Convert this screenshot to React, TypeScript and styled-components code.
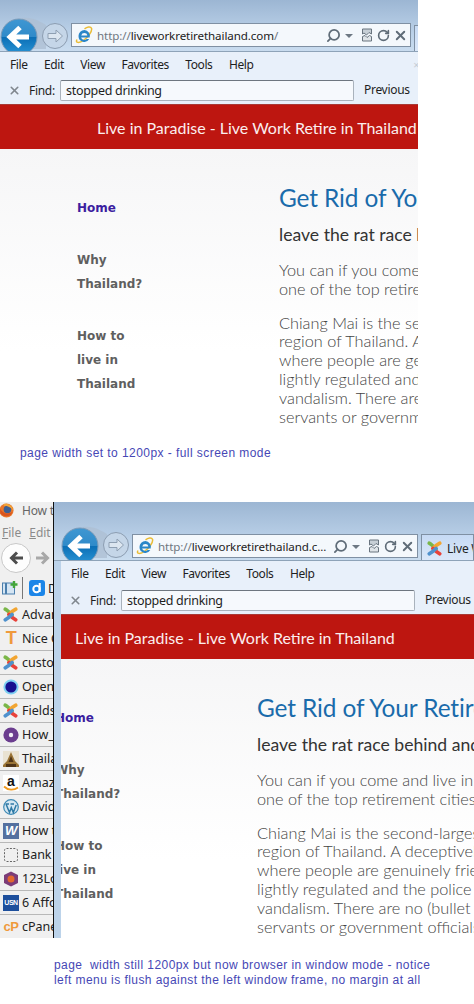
import React from "react";
import styled, { createGlobalStyle } from "styled-components";
import { RotateCw, Search, X } from "lucide-react";

const Global = createGlobalStyle`
  html, body { margin: 0; padding: 0; background: #fff; }
  #root { width: 474px; height: 1004px; overflow: hidden; }
  * { box-sizing: border-box; }
`;

const Sheet = styled.main`
  width: 474px;
  height: 1004px;
  display: flex;
  flex-direction: column;
  background: #fff;
`;

const Shot = styled.section<{ $h: number; $w: number }>`
  display: flex;
  width: ${(p) => p.$w}px;
  height: ${(p) => p.$h}px;
  flex: none;
  overflow: hidden;
`;

const Win = styled.div`
  flex: 1;
  min-width: 0;
  display: flex;
  flex-direction: column;
  overflow: hidden;
`;

const Nav = styled.div<{ $h: number; $frame: number }>`
  height: ${(p) => p.$h}px;
  flex: none;
  display: flex;
  align-items: flex-end;
  padding-left: ${(p) => p.$frame}px;
  background: linear-gradient(#9cb6d3, #bdd3ea 70%, #c9dcef);
  border-bottom: 1px solid #8ea3b8;
  overflow: hidden;
`;

const Cluster = styled.svg`
  flex: none;
  display: block;
  margin-bottom: -1px;
`;

const Address = styled.div<{ $w: number; $drop: number }>`
  flex: none;
  width: ${(p) => p.$w}px;
  height: 24px;
  margin-bottom: ${(p) => p.$drop}px;
  display: flex;
  align-items: center;
  padding: 0 2px 0 3px;
  background: #f4f8fc;
  border: 1px solid #7f90a3;
  font: 11.6px "Noto Sans", sans-serif;
  color: #222;
`;

const Url = styled.span`
  margin-left: 4px;
  flex: 1;
  min-width: 0;
  white-space: nowrap;
  overflow: hidden;
  letter-spacing: -0.1px;
`;

const Dim = styled.span`
  color: #6f7780;
`;

const ToolIcons = styled.div`
  flex: none;
  display: flex;
  align-items: center;
  gap: 3px;
  color: #5f6c78;
`;

const Caret = styled.i`
  width: 0;
  height: 0;
  margin: 1px 4px 0 1px;
  border: 4px solid transparent;
  border-top: 4px solid #6d7883;
  border-bottom: 0;
`;

const TabStub = styled.div`
  flex: 1;
  min-width: 0;
  margin-left: 3px;
  height: 27px;
  margin-bottom: -1px;
  padding-left: 5px;
  display: flex;
  align-items: center;
  gap: 4px;
  background: linear-gradient(#c6daf4, #dbe8f9);
  border: 1px solid #7f90a3;
  border-bottom: 0;
  font: 12px "Noto Sans", sans-serif;
  color: #222;
  white-space: nowrap;
  overflow: hidden;
`;

const Body = styled.div<{ $frame: number }>`
  flex: 1;
  min-height: 0;
  display: flex;
  flex-direction: column;
  border-left: ${(p) => p.$frame}px solid #bcd3ea;
`;

const MenuRow = styled.nav<{ $h: number }>`
  height: ${(p) => p.$h}px;
  flex: none;
  display: flex;
  align-items: center;
  padding: 0 0 2px 10px;
  gap: 16.5px;
  background: #e8f0fa;
  font: 12px "Noto Sans", sans-serif;
  letter-spacing: -0.42px;
  color: #1e1e1e;
`;

const BarClose = styled.span`
  margin-left: auto;
  margin-right: -1px;
  color: #c4ccd4;
  font-size: 11px;
`;

const FindRow = styled.div<{ $h: number }>`
  height: ${(p) => p.$h}px;
  flex: none;
  display: flex;
  align-items: center;
  padding: 0 0 1px 8px;
  background: #e8f0fa;
  font: 12px "Noto Sans", sans-serif;
  letter-spacing: -0.3px;
  color: #1e1e1e;
  white-space: nowrap;
  overflow: hidden;
`;

const FindLabel = styled.span`
  margin: 0 3px 0 8px;
  width: 28px;
`;

const FindInput = styled.div`
  flex: none;
  width: 294px;
  height: 21px;
  padding-left: 5px;
  display: flex;
  align-items: center;
  background: #f6f9fd;
  border: 1px solid #a9b2bc;
  border-top-color: #6e7680;
  border-radius: 2px;
  font-size: 12.5px;
`;

const Prev = styled.span`
  margin: 0 0 2px 10px;
`;

const Banner = styled.header<{ $left: number }>`
  height: 45px;
  flex: none;
  display: flex;
  align-items: center;
  padding-left: ${(p) => p.$left}px;
  background: #bd1610;
  border-top: 1px solid #a83a36;
  font: 16px Lato, sans-serif;
  color: #fbeeee;
  white-space: nowrap;
`;

const Page = styled.div`
  flex: 1;
  min-height: 0;
  overflow: hidden;
  background: linear-gradient(#f6f6f7, #fff 72%);
`;

const PageInner = styled.div<{ $left: number }>`
  margin-left: ${(p) => p.$left}px;
  display: grid;
  grid-template-columns: 202px 1fr;
  white-space: nowrap;
`;

const SideMenu = styled.ul`
  list-style: none;
  margin: 0;
  padding: 47px 0 0;
`;

const SideItem = styled.li<{ $active?: boolean }>`
  margin-bottom: 28px;
  font: bold 12px/24px "DejaVu Sans", sans-serif;
  color: ${(p) => (p.$active ? "#3c1ea0" : "#5f5f5f")};
`;

const Main = styled.article`
  padding-top: 33px;
`;

const Title = styled.h1`
  margin: 0;
  font: 400 24.4px/32px Lato, sans-serif;
  letter-spacing: -0.1px;
  color: #1a6bab;
`;

const Sub = styled.h2`
  margin: 11px 0 0;
  font: 400 17.6px/20px Lato, sans-serif;
  color: #333;
`;

const Para = styled.p`
  margin: 15px 0 0;
  font: 300 16.3px/18.8px Lato, sans-serif;
  color: #444;
  &:first-of-type { margin-top: 16px; }
`;

const Line = styled.span`
  display: block;
`;

const Caption = styled.p<{ $left: number; $top: number; $h: number }>`
  margin: 0;
  flex: none;
  height: ${(p) => p.$h}px;
  padding: ${(p) => p.$top}px 0 0 ${(p) => p.$left}px;
  font: 12px/15px "Liberation Sans", Arial, sans-serif;
  letter-spacing: 0.44px;
  color: #4647b5;
  white-space: pre;
`;

const Side = styled.aside`
  flex: none;
  width: 54px;
  display: flex;
  flex-direction: column;
  background: #f0f0f0;
  border-right: 1px solid #111;
  overflow: hidden;
  font: 12.5px "Noto Sans", sans-serif;
  color: #222;
  white-space: nowrap;
`;

const FxTitle = styled.div`
  height: 20px;
  flex: none;
  display: flex;
  align-items: center;
  gap: 8px;
  margin: -2px 0 2px -1px;
  color: #666;
  font-size: 12px;
  letter-spacing: -0.2px;
`;

const FxMenu = styled.div`
  height: 20px;
  flex: none;
  display: flex;
  gap: 8px;
  align-items: center;
  padding-left: 2px;
  color: #8b8b8b;
  font-size: 12px;
  & u { text-decoration-thickness: 1px; }
`;

const FxNav = styled.div`
  height: 32px;
  flex: none;
  display: flex;
  align-items: center;
  padding-left: 1px;
  gap: 4px;
`;

const RoundBack = styled.div`
  width: 30px;
  height: 30px;
  flex: none;
  display: flex;
  align-items: center;
  justify-content: center;
  background: #fdfdfd;
  border: 1px solid #c8c8c8;
  border-radius: 50%;
`;

const FxBar = styled.div`
  height: 29px;
  flex: none;
  display: flex;
  align-items: center;
  padding-left: 2px;
  gap: 3px;
  border-bottom: 1px solid #b8b8b8;
`;

const FxSep = styled.i`
  width: 1px;
  height: 22px;
  margin: 0 3px 0 1px;
  background: #777;
  flex: none;
`;

const Bookmark = styled.div`
  height: 24px;
  flex: none;
  display: flex;
  align-items: center;
  gap: 3px;
  padding-left: 3px;
  border-bottom: 1px solid #b8b8b8;
`;

const Badge = styled.span<{ $bg: string; $fg: string; $size: number; $italic?: boolean }>`
  width: 16px;
  height: 16px;
  flex: none;
  display: flex;
  align-items: center;
  justify-content: center;
  background: ${(p) => p.$bg};
  color: ${(p) => p.$fg};
  font: ${(p) => (p.$italic ? "italic" : "normal")} bold ${(p) => p.$size}px "Liberation Sans", sans-serif;
  letter-spacing: -0.5px;
`;

const TabText = styled.span`
  letter-spacing: -0.2px;
`;

/* ---------- drawings ---------- */

const NavButtons = () => (
  <Cluster width="71" height="41" viewBox="0 0 71 41">
    <defs>
      <linearGradient id="backFill" x1="0" y1="0" x2="0" y2="1">
        <stop offset="0" stopColor="#3f97d2" />
        <stop offset="0.5" stopColor="#2f8ac9" />
        <stop offset="0.51" stopColor="#0b6fb6" />
        <stop offset="1" stopColor="#2a95d6" />
      </linearGradient>
    </defs>
    <path d="M22 7 C34 6 40 11 46 14 L46 38 L22 38 Z" fill="#aebfd3" opacity=".8" />
    <circle cx="55" cy="25" r="12.5" fill="#c5d6e8" stroke="#8c9db1" />
    <path d="M47.5 25 L54 19 V22.5 H62 V27.5 H54 V31 Z" transform="scale(-1 1) translate(-110 0)" fill="#dce6f0" stroke="#8e9fb2" strokeWidth="1" strokeLinejoin="round" />
    <circle cx="19" cy="26" r="18" fill="url(#backFill)" stroke="#7d9bb8" />
    <path d="M10 26 H29 M20 16.5 L10 26 L20 35.5" fill="none" stroke="#fff" strokeWidth="5" strokeLinejoin="miter" />
  </Cluster>
);

const IeLogo = ({ size = 18 }: { size?: number }) => (
  <svg width={size} height={size} viewBox="0 0 18 18" style={{ flex: "none" }}>
    <path d="M2 13.5 C0 17 4 17.5 9 14 C13 11 17.5 5 16.5 2.2 C15.5 0 12 1 9.5 2.8" fill="none" stroke="#e9bc35" strokeWidth="1.5" />
    <path d="M9.5 4 a6 6 0 0 0 -6 6 a5.8 5.8 0 0 0 10.8 3 h-2.6 a3.4 3.4 0 0 1 -5.6 -1.6 h8.6 a6 6 0 0 0 -5.2 -7.4 z M6.2 9.4 a3.3 3.3 0 0 1 6.3 0 z" fill="#2a86c8" fillRule="evenodd" />
  </svg>
);

const CompatIcon = () => (
  <svg width="14" height="14" viewBox="0 0 14 14" fill="none" stroke="#69747f" strokeWidth="1">
    <path d="M2.5 1 H11.5 V6 L9 4.5 L6.5 7 L4 5 L2.5 6 Z" fill="#c7cfd6" />
    <path d="M2.5 8.5 L5 7.5 L7 9.5 L9.5 7.5 L11.5 8.5 V13 H2.5 Z" fill="#dfe4e8" />
  </svg>
);

const Joomla = ({ size = 17 }: { size?: number }) => (
  <svg width={size} height={size} viewBox="0 0 16 16" style={{ flex: "none", marginLeft: -1 }} fill="none" strokeWidth="3.4" strokeLinecap="round">
    <path d="M3 3 C5 4 7 6 9.5 8.5" stroke="#7ab648" />
    <path d="M13 3 C11 4 8.5 6 6.5 8" stroke="#f2a531" />
    <path d="M13 13 C11 12 8.5 10 6.5 8" stroke="#e8423a" />
    <path d="M3 13 C5 12 7.5 10 9.5 8" stroke="#4f91cd" />
  </svg>
);

const Firefox = () => (
  <svg width="15" height="15" viewBox="0 0 16 16" style={{ flex: "none" }}>
    <circle cx="8" cy="8" r="7.5" fill="#e8762b" />
    <circle cx="9" cy="7" r="4" fill="#3d5f93" />
    <path d="M1 6 C4 11 10 13 14.5 9 C13 15 5 16 1.5 11 Z" fill="#d9541e" />
    <path d="M5 1 C10 0 15 3 15 8 C13 5 10 3 5 3 Z" fill="#f2a53a" />
  </svg>
);

const Ring = ({ bg, fg, inner }: { bg: string; fg: string; inner: string }) => (
  <svg width="16" height="16" viewBox="0 0 16 16" style={{ flex: "none" }}>
    <circle cx="8" cy="8" r="7.6" fill={bg} />
    <circle cx="8" cy="8" r="5.6" fill={fg} />
    <circle cx="8" cy="8" r="2.2" fill={inner} />
  </svg>
);

const Temple = () => (
  <svg width="16" height="16" viewBox="0 0 16 16" style={{ flex: "none" }}>
    <rect width="16" height="16" fill="#e9e2d2" />
    <path d="M8 1 L12 10 L16 14 V16 H0 V14 L4 10 Z" fill="#9a7436" />
    <path d="M8 5 L10.5 11 H5.5 Z M3 13 H13 V16 H3 Z" fill="#4f3518" />
  </svg>
);

const Amazon = () => (
  <svg width="16" height="16" viewBox="0 0 16 16" style={{ flex: "none" }}>
    <rect width="16" height="16" fill="#fff" />
    <text x="8" y="11" textAnchor="middle" fontFamily="Liberation Sans" fontWeight="700" fontSize="14" fill="#111">a</text>
    <path d="M1 11.5 C5 15.5 11 15.5 15 12.5" fill="none" stroke="#f09a1e" strokeWidth="1.8" />
  </svg>
);

const Wordpress = () => (
  <svg width="16" height="16" viewBox="0 0 16 16" style={{ flex: "none" }}>
    <circle cx="8" cy="8" r="7.3" fill="#d5e7f2" stroke="#3d89b4" strokeWidth="1.2" />
    <path d="M3 5 L6.5 13.5 L8.3 8.5 L10.3 13.5 L13.2 6 M2.5 5 H6 M7.5 5 H11" fill="none" stroke="#2f7aa6" strokeWidth="1.5" />
  </svg>
);

const Dashed = () => (
  <svg width="16" height="16" viewBox="0 0 16 16" style={{ flex: "none" }}>
    <rect x="1.5" y="1.5" width="13" height="13" rx="2" fill="none" stroke="#666" strokeDasharray="2 1.4" />
  </svg>
);

const Hex = () => (
  <svg width="16" height="16" viewBox="0 0 16 16" style={{ flex: "none" }}>
    <path d="M8 0.5 L15 4 V12 L8 15.5 L1 12 V4 Z" fill="#7c3c78" />
    <circle cx="8" cy="8" r="3.5" fill="#e2682e" />
  </svg>
);

const AddonIcon = () => (
  <svg width="16" height="16" viewBox="0 0 16 16" style={{ flex: "none" }}>
    <rect x="0.5" y="3" width="12" height="11" fill="#d5e5f3" stroke="#4b7fad" />
    <rect x="3" y="3" width="2" height="11" fill="#4b7fad" />
    <path d="M12 1 V8 M8.5 4.5 H15.5" stroke="#43a53a" strokeWidth="2.4" />
  </svg>
);

const DIcon = () => (
  <svg width="16" height="16" viewBox="0 0 16 16" style={{ flex: "none" }}>
    <rect width="16" height="16" rx="3" fill="#1d86e8" />
    <circle cx="7.5" cy="9" r="3.2" fill="none" stroke="#fff" strokeWidth="2" />
    <path d="M10.7 3 V12" stroke="#fff" strokeWidth="2" />
  </svg>
);

const FxArrow = ({ color, flip }: { color: string; flip?: boolean }) => (
  <svg width="15" height="14" viewBox="0 0 15 14" style={{ flex: "none", transform: flip ? "scaleX(-1)" : undefined }}>
    <path d="M2 7 H14 M8 1.5 L2.5 7 L8 12.5" fill="none" stroke={color} strokeWidth="3" />
  </svg>
);

/* ---------- data ---------- */

const bookmarks: { icon: React.ReactNode; label: string }[] = [
  { icon: <Joomla />, label: "Advanced" },
  { icon: <Badge $bg="transparent" $fg="#ef9a3c" $size={18}>T</Badge>, label: "Nice Code" },
  { icon: <Joomla />, label: "custom" },
  { icon: <Ring bg="#7fd0f2" fg="#16108f" inner="#16108f" />, label: "Open" },
  { icon: <Joomla />, label: "Fields" },
  { icon: <Ring bg="#6b3d8f" fg="#6b3d8f" inner="#f3f0f6" />, label: "How_to" },
  { icon: <Temple />, label: "Thailand" },
  { icon: <Amazon />, label: "Amazon" },
  { icon: <Wordpress />, label: "David" },
  { icon: <Badge $bg="#54709f" $fg="#fff" $size={13} $italic>W</Badge>, label: "How to" },
  { icon: <Dashed />, label: "Bank of" },
  { icon: <Hex />, label: "123Logo" },
  { icon: <Badge $bg="#1d4f9c" $fg="#fff" $size={7}>USN</Badge>, label: "6 Afford" },
  { icon: <Badge $bg="transparent" $fg="#ef9a3c" $size={13}>cP</Badge>, label: "cPanel" },
];

const FirefoxPanel = () => (
  <Side>
    <FxTitle>
      <Firefox />
      <span>How to</span>
    </FxTitle>
    <FxMenu>
      <span><u>F</u>ile</span>
      <span><u>E</u>dit</span>
    </FxMenu>
    <FxNav>
      <RoundBack><FxArrow color="#4d4d4d" /></RoundBack>
      <FxArrow color="#a8a8a8" flip />
    </FxNav>
    <FxBar>
      <AddonIcon />
      <FxSep />
      <DIcon />
      <span>D</span>
    </FxBar>
    {bookmarks.map((b) => (
      <Bookmark key={b.label}>
        {b.icon}
        <span>{b.label}</span>
      </Bookmark>
    ))}
  </Side>
);

type BrowserProps = {
  navH: number;
  frame: number;
  addressW: number;
  drop: number;
  url: React.ReactNode;
  tab: React.ReactNode;
  menuH: number;
  findH: number;
  bannerLeft: number;
  pageLeft: number;
  barClose?: boolean;
};

const Browser = (p: BrowserProps) => (
  <Win>
    <Nav $h={p.navH} $frame={p.frame}>
      <NavButtons />
      <Address $w={p.addressW} $drop={p.drop}>
        <IeLogo />
        <Url>{p.url}</Url>
        <ToolIcons>
          <Search size={15} strokeWidth={2.8} style={{ transform: "scaleX(-1)" }} />
          <Caret />
          <CompatIcon />
          <RotateCw size={13} strokeWidth={3} />
          <X size={15} strokeWidth={3} />
        </ToolIcons>
      </Address>
      <TabStub>{p.tab}</TabStub>
    </Nav>
    <Body $frame={p.frame}>
      <MenuRow $h={p.menuH}>
        <span>File</span>
        <span>Edit</span>
        <span>View</span>
        <span>Favorites</span>
        <span>Tools</span>
        <span>Help</span>
        {p.barClose && <BarClose>×</BarClose>}
      </MenuRow>
      <FindRow $h={p.findH}>
        <X size={13} strokeWidth={3} color="#80878e" />
        <FindLabel>Find:</FindLabel>
        <FindInput>stopped drinking</FindInput>
        <Prev>Previous</Prev>
      </FindRow>
      <Banner $left={p.bannerLeft}>Live in Paradise - Live Work Retire in Thailand</Banner>
      <Page>
        <PageInner $left={p.pageLeft}>
          <SideMenu>
            <SideItem $active>Home</SideItem>
            <SideItem>Why<br />Thailand?</SideItem>
            <SideItem>How to<br />live in<br />Thailand</SideItem>
          </SideMenu>
          <Main>
            <Title>Get Rid of Your Retirement Worries</Title>
            <Sub>leave the rat race behind and live well</Sub>
            <Para>
              <Line>You can if you come and live in Chiang Mai,</Line>
              <Line>one of the top retirement cities in the world</Line>
            </Para>
            <Para>
              <Line>Chiang Mai is the second-largest city in the</Line>
              <Line>region of Thailand. A deceptively modern city</Line>
              <Line>where people are genuinely friendly</Line>
              <Line>lightly regulated and the police are few</Line>
              <Line>vandalism. There are no (bullet proof)</Line>
              <Line>servants or government officials</Line>
            </Para>
          </Main>
        </PageInner>
      </Page>
    </Body>
  </Win>
);

export default function App() {
  return (
    <>
      <Global />
      <Sheet>
        <Shot $w={418} $h={430}>
          <Browser
            navH={52}
            frame={0}
            addressW={340}
            drop={4}
            url={<><Dim>http://</Dim>liveworkretirethailand.com<Dim>/</Dim></>}
            tab={null}
            menuH={26}
            findH={26}
            bannerLeft={97}
            pageLeft={77}
            barClose
          />
        </Shot>
        <Caption $left={20} $top={16} $h={72}>page width set to 1200px - full screen mode</Caption>
        <Shot $w={474} $h={436}>
          <FirefoxPanel />
          <Browser
            navH={59}
            frame={7}
            addressW={286}
            drop={2}
            url={<><Dim>http://</Dim>liveworkretirethailand.c...</>}
            tab={<><Joomla /><TabText>Live Work Retire</TabText></>}
            menuH={26}
            findH={27}
            bannerLeft={14}
            pageLeft={-6}
          />
        </Shot>
        <Caption $left={54} $top={20} $h={66}>
          {"page  width still 1200px but now browser in window mode - notice\nleft menu is flush against the left window frame, no margin at all"}
        </Caption>
      </Sheet>
    </>
  );
}
